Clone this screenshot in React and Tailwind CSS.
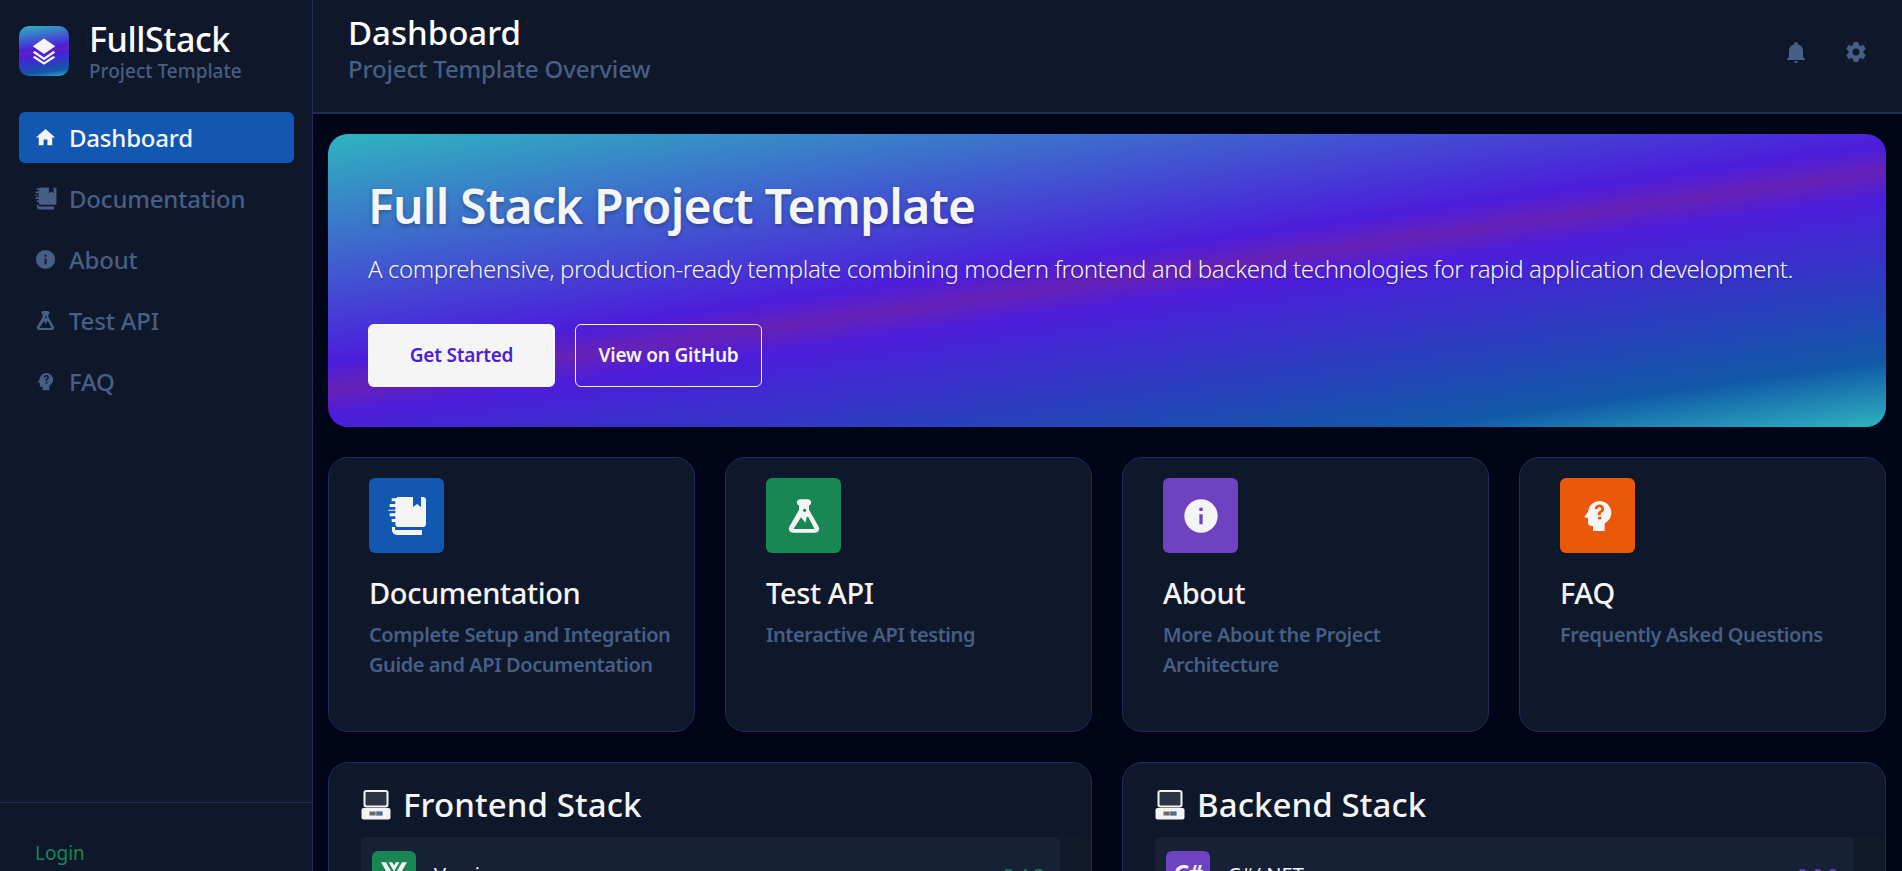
const font = "font-['Noto_Sans','Open_Sans',sans-serif]";
const heroGradient =
  "bg-[linear-gradient(172deg,#2fb4bf_0%,#4c1ddb_45%,#6622b6_50%,#4c1ddb_55%,#1158a8_87%,#2fb4bf_100%)]";

const paths = {
  home: "M10 20v-6h4v6h5v-8h3L12 3 2 12h3v8z",
  book: "M7 .6h8.6v6l2.4-1.8 2.4 1.8v-6h1a2 2 0 0 1 2 2v14a2 2 0 0 1-2 2H7a2 2 0 0 1-2-2v-1H2.8v-1.8H5v-1.6H1.6v-1.8H5v-1.6H.8V8.2H5V6.6H1.6V4.8H5V3.2H2.8V1.4h2.6A2 2 0 0 1 7 .6M3 18.6h1.8v1.8H21v3H6a3 3 0 0 1-3-3z",
  info: "M13 9h-2V7h2m0 10h-2v-6h2m-1-9A10 10 0 0 0 2 12a10 10 0 0 0 10 10 10 10 0 0 0 10-10A10 10 0 0 0 12 2z",
  flask: "M9.5 2h5a1.9 1.9 0 0 1 .5 3.7v2.6l5.7 10a2.4 2.4 0 0 1-2.1 3.7H5.4a2.4 2.4 0 0 1-2.1-3.7l5.7-10V5.7A1.9 1.9 0 0 1 9.5 2M5.7 19.8h12.6l-3.7-7.2-.9-.2-.9 3.6-2.6-3.2zM12.4 7.6a1 1 0 1 0 0 2 1 1 0 0 0 0-2",
  head: "M13 3C9.23 3 6.19 5.95 6 9.66L4.08 12.19C3.84 12.5 4.08 13 4.5 13H6v3c0 1.11.89 2 2 2h1v3h7v-4.68c2.37-1.12 4-3.53 4-6.32 0-3.87-3.12-7-7-7m1 11h-2v-1.5h2zm1.5-5.3c-.4.6-.9 1-1.3 1.3-.4.4-.6.7-.7 1.5h-1.8c.1-1.3.5-2 1.1-2.5.5-.4 1-.7 1.1-1.1.1-.6-.3-1.1-1-1.1-.6 0-1.1.4-1.2 1H10c.1-1.7 1.4-2.7 2.9-2.7 2 0 3.2 1.7 2.6 3.6z",
  bell: "M21 19v1H3v-1l2-2v-6c0-3.1 2.03-5.83 5-6.71V4a2 2 0 0 1 4 0v.29c2.97.88 5 3.61 5 6.71v6zm-7 2a2 2 0 0 1-4 0",
  cog: "M12 15.5A3.5 3.5 0 0 1 8.5 12 3.5 3.5 0 0 1 12 8.5a3.5 3.5 0 0 1 3.5 3.5 3.5 3.5 0 0 1-3.5 3.5m7.43-2.53c.04-.32.07-.64.07-.97s-.03-.66-.07-1l2.11-1.63c.19-.15.24-.42.12-.64l-2-3.46c-.12-.22-.39-.31-.61-.22l-2.49 1c-.52-.39-1.06-.73-1.69-.98l-.37-2.65A.506.506 0 0 0 14 2h-4c-.25 0-.46.18-.5.42l-.37 2.65c-.63.25-1.17.59-1.69.98l-2.49-1c-.22-.09-.49 0-.61.22l-2 3.46c-.13.22-.07.49.12.64L4.57 11c-.04.34-.07.67-.07 1s.03.65.07.97l-2.11 1.66c-.19.15-.25.42-.12.64l2 3.46c.12.22.39.3.61.22l2.49-1.01c.52.4 1.06.74 1.69.99l.37 2.65c.04.24.25.42.5.42h4c.25 0 .46-.18.5-.42l.37-2.65c.63-.26 1.17-.59 1.69-.99l2.49 1.01c.22.08.49 0 .61-.22l2-3.46c.12-.22.07-.49-.12-.64z",
  layers: "M12 2 3 8.2l9 6.2 9-6.2zM4.6 12 3 13.1l9 6.2 9-6.2-1.6-1.1-7.4 5.1zM4.6 16 3 17.1 12 23l9-5.9-1.6-1.1-7.4 5z",
};

function Icon({ name, className }) {
  return (
    <svg viewBox="0 0 24 24" fill="currentColor" fillRule="evenodd" className={className}>
      <path d={paths[name]} />
    </svg>
  );
}

// old style desktop computer next to the stack titles
function ComputerIcon() {
  return (
    <svg viewBox="0 0 24 24" className="h-[30px] w-[30px] shrink-0">
      <rect x="2.8" y="0.8" width="18.4" height="12.4" rx="1.4" fill="#2c3647" stroke="#f5f5f5" strokeWidth="1.6" />
      <rect x="0.4" y="14.4" width="23.2" height="9.2" rx="1.6" fill="#f5f5f5" />
      <rect x="7" y="17.4" width="4.6" height="2.8" fill="#5b6a80" stroke="#c08a4a" strokeWidth="0.5" />
      <rect x="12.4" y="17.4" width="4.6" height="2.8" fill="#5b6a80" stroke="#4a7ab0" strokeWidth="0.5" />
    </svg>
  );
}

function VueLogo() {
  return (
    <svg viewBox="0 0 24 21" fill="#f5f5f5" className="h-[23px] w-[26px]">
      <path d="M0 0h4.6L12 13 19.4 0H24L12 21z" />
      <path d="M7 0h3.3L12 3.2 13.7 0H17l-5 8.6z" />
    </svg>
  );
}

const navItems = [
  { label: "Dashboard", icon: "home", active: true },
  { label: "Documentation", icon: "book" },
  { label: "About", icon: "info" },
  { label: "Test API", icon: "flask" },
  { label: "FAQ", icon: "head" },
];

const cards = [
  { title: "Documentation", text: "Complete Setup and Integration Guide and API Documentation", icon: "book", bg: "bg-[#1258b3]" },
  { title: "Test API", text: "Interactive API testing", icon: "flask", bg: "bg-[#198754]" },
  { title: "About", text: "More About the Project Architecture", icon: "info", bg: "bg-[#6f42c1]" },
  { title: "FAQ", text: "Frequently Asked Questions", icon: "head", bg: "bg-[#ea580c]" },
];

function Sidebar() {
  return (
    <aside className="flex w-[313px] shrink-0 flex-col border-r border-[#1e2d5a] bg-[#0f172a]">
      <div className="flex items-center gap-[20px] px-[19px] pt-[19px]">
        <div className={`flex h-[50px] w-[50px] items-center justify-center rounded-[10px] ${heroGradient}`}>
          <Icon name="layers" className="h-[30px] w-[30px] text-[#f5f5f5]" />
        </div>
        <div className="flex flex-col">
          <span className="text-[34px] leading-[40px] font-medium tracking-[-0.4px] text-white">FullStack</span>
          <span className="text-[19px] leading-[24px] font-medium text-[#475e85]">Project Template</span>
        </div>
      </div>

      <nav className="mt-[29px] flex flex-col gap-[10px] pr-[18px] pl-[19px]">
        {navItems.map((item) => (
          <a
            key={item.label}
            className={`flex h-[51px] items-center gap-[12px] rounded-[6px] pl-[15px] text-[24px] font-medium tracking-[-0.2px] ${
              item.active ? "bg-[#1258b3] text-[#f5f5f5]" : "text-[#475e85]"
            }`}
          >
            <Icon name={item.icon} className="h-[23px] w-[23px]" />
            {item.label}
          </a>
        ))}
      </nav>

      <div className="mt-auto h-[69px] border-t border-[#1e2d5a] pt-[36px] pl-[35px] text-[19px] leading-[28px] text-[#198754]">
        Login
      </div>
    </aside>
  );
}

function Header() {
  return (
    <header className="flex h-[114px] shrink-0 items-center justify-between border-b-2 border-[#1e2d5a] bg-[#0f172a] pr-[34px] pb-[14px] pl-[35px]">
      <div className="flex flex-col">
        <h1 className="text-[33px] leading-[40px] font-medium text-white">Dashboard</h1>
        <p className="text-[24px] leading-[32px] font-medium tracking-[-0.15px] text-[#475e85]">Project Template Overview</p>
      </div>
      <div className="mt-[6px] flex items-center gap-[36px] text-[#475e85]">
        <Icon name="bell" className="h-[24px] w-[24px]" />
        <Icon name="cog" className="h-[24px] w-[24px]" />
      </div>
    </header>
  );
}

function Hero() {
  return (
    <section className={`h-[293px] rounded-[20px] px-[40px] pt-[40px] ${heroGradient}`}>
      <h2 className="text-[48px] leading-[64px] font-semibold tracking-[-0.8px] text-[#f5f5f5] [text-shadow:0_2px_4px_rgba(0,0,0,0.3)]">
        Full Stack Project Template
      </h2>
      <p className="mt-[13px] text-[24px] leading-[36px] font-light tracking-[-0.43px] whitespace-nowrap text-[#f5f5f5] [text-shadow:0_1px_2px_rgba(0,0,0,0.3)]">
        A comprehensive, production-ready template combining modern frontend and backend technologies for rapid application development.
      </p>
      <div className="mt-[37px] flex gap-[20px]">
        <button className="h-[63px] w-[187px] rounded-[6px] bg-[#f5f5f5] text-[19px] font-semibold tracking-[-0.2px] text-[#4c1ddb]">
          Get Started
        </button>
        <button className="h-[63px] w-[187px] rounded-[6px] border border-[#f5f5f5] text-[19px] font-semibold tracking-[-0.2px] text-[#f5f5f5]">
          View on GitHub
        </button>
      </div>
    </section>
  );
}

function StackCard({ title, name, version, versionColor, badgeColor, badge }) {
  return (
    <section className="h-[200px] overflow-hidden rounded-[20px] border border-[#1e2d5a] bg-[#0f172a] pt-[20px] pl-[32px]">
      <h3 className="flex items-center gap-[12px] text-[33px] leading-[44px] font-medium tracking-[0.1px] text-[#f5f5f5]">
        <ComputerIcon />
        {title}
      </h3>
      <div className="mt-[10px] mr-[2px] rounded-[6px] bg-[#111a2a] pr-[29px]">
        <div className="flex h-[100px] items-start rounded-[6px] bg-[#172136] py-[14px] pr-[16px] pl-[11px]">
          <div className={`flex h-[44px] w-[44px] shrink-0 items-center justify-center rounded-[6px] ${badgeColor}`}>
            {badge}
          </div>
          <span className="mt-[10px] ml-[18px] text-[20px] leading-[28px] text-[#f5f5f5]">{name}</span>
          <span className={`mt-[10px] ml-auto text-[18px] leading-[28px] ${versionColor}`}>{version}</span>
        </div>
      </div>
    </section>
  );
}

export default function App() {
  return (
    <div className={`flex h-[871px] overflow-hidden bg-[#000417] ${font}`}>
      <Sidebar />
      <div className="flex min-w-0 flex-1 flex-col">
        <Header />
        <main className="flex flex-col gap-[30px] pt-[20px] pr-[16px] pl-[15px]">
          <Hero />
          <div className="grid grid-cols-4 gap-[30px]">
            {cards.map((card) => (
              <div key={card.title} className="h-[275px] rounded-[20px] border border-[#1e2d5a] bg-[#0f172a] pt-[20px] pr-[18px] pl-[40px]">
                <div className={`flex h-[75px] w-[75px] items-center justify-center rounded-[6px] ${card.bg}`}>
                  <Icon name={card.icon} className="h-[40px] w-[40px] text-[#f5f5f5]" />
                </div>
                <h4 className="mt-[20px] text-[29px] leading-[40px] font-medium tracking-[-0.37px] text-[#f5f5f5]">{card.title}</h4>
                <p className="mt-[7px] text-[20px] leading-[30px] font-semibold tracking-[-0.42px] text-[#475e85]">{card.text}</p>
              </div>
            ))}
          </div>
          <div className="grid grid-cols-2 gap-[30px]">
            <StackCard
              title="Frontend Stack"
              name="Vue.js"
              version="3.4.3"
              versionColor="text-[#198754]"
              badgeColor="bg-[#198754]"
              badge={<VueLogo />}
            />
            <StackCard
              title="Backend Stack"
              name="C#/.NET"
              version="9.0.0"
              versionColor="text-[#6f42c1]"
              badgeColor="bg-[#6f42c1]"
              badge={<span className="text-[24px] leading-[28px] font-bold text-[#f5f5f5] italic">C#</span>}
            />
          </div>
        </main>
      </div>
    </div>
  );
}
